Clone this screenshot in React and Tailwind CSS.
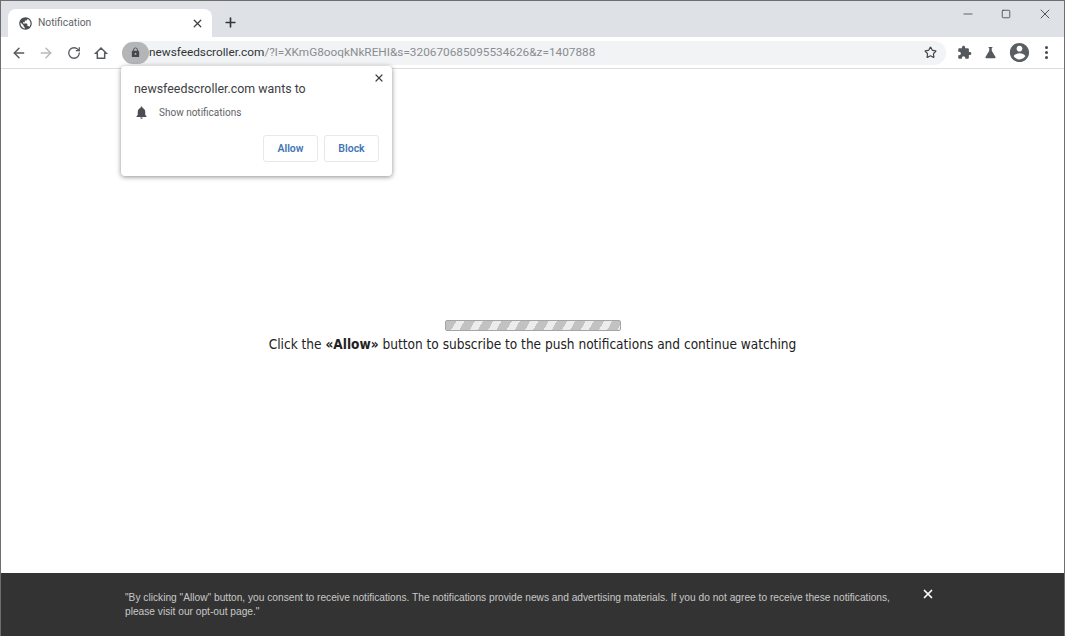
import { ArrowLeft, ArrowRight, RotateCw, Star, X, Plus, Minus, Square } from "lucide-react";

const Mat = ({ d, className }) => (
  <svg viewBox="0 0 24 24" className={className} fill="currentColor"><path d={d} /></svg>
);

const globe = "M12 2C6.48 2 2 6.48 2 12s4.48 10 10 10 10-4.48 10-10S17.52 2 12 2zm-1 17.93c-3.95-.49-7-3.85-7-7.93 0-.62.08-1.21.21-1.79L9 15v1c0 1.1.9 2 2 2v1.93zm6.9-2.54c-.26-.81-1-1.39-1.9-1.39h-1v-3c0-.55-.45-1-1-1H8v-2h2c.55 0 1-.45 1-1V7h2c1.1 0 2-.9 2-2v-.41c2.93 1.19 5 4.06 5 7.41 0 2.08-.8 3.97-2.1 5.39z";
const bell = "M12 22c1.1 0 2-.9 2-2h-4c0 1.1.9 2 2 2zm6-6v-5c0-3.07-1.63-5.64-4.5-6.32V4c0-.83-.67-1.5-1.5-1.5s-1.5.67-1.5 1.5v.68C7.64 5.36 6 7.92 6 11v5l-2 2v1h16v-1l-2-2z";
const lock = "M18 8h-1V6c0-2.76-2.24-5-5-5S7 3.24 7 6v2H6c-1.1 0-2 .9-2 2v10c0 1.1.9 2 2 2h12c1.1 0 2-.9 2-2V10c0-1.1-.9-2-2-2zm-6 9c-1.1 0-2-.9-2-2s.9-2 2-2 2 .9 2 2-.9 2-2 2zm3.1-9H8.9V6c0-1.71 1.39-3.1 3.1-3.1 1.71 0 3.1 1.39 3.1 3.1v2z";
const puzzle = "M20.5 11H19V7c0-1.1-.9-2-2-2h-4V3.5C13 2.12 11.88 1 10.5 1S8 2.12 8 3.5V5H4c-1.1 0-1.99.9-1.99 2v3.8H3.5c1.49 0 2.7 1.21 2.7 2.7s-1.21 2.7-2.7 2.7H2V20c0 1.1.9 2 2 2h3.8v-1.5c0-1.49 1.21-2.7 2.7-2.7 1.49 0 2.7 1.21 2.7 2.7V22H17c1.1 0 2-.9 2-2v-4h1.5c1.38 0 2.5-1.12 2.5-2.5S21.88 11 20.5 11z";
const account = "M12 2C6.48 2 2 6.48 2 12s4.48 10 10 10 10-4.48 10-10S17.52 2 12 2zm0 3c1.66 0 3 1.34 3 3s-1.34 3-3 3-3-1.34-3-3 1.34-3 3-3zm0 14.2c-2.5 0-4.71-1.28-6-3.22.03-1.99 4-3.08 6-3.08 1.99 0 5.97 1.09 6 3.08-1.29 1.94-3.5 3.22-6 3.22z";
const flask = "M9 3h6v1.6h-1V9l6 10.2c.5.9-.1 1.8-1.1 1.8H5.100c-1 0-1.600-.9-1.100-1.800L10 9V4.600H9z";

export default function App() {
  return (
    <div className="relative flex h-[636px] w-[1065px] flex-col overflow-hidden border-x border-t border-[#6e6e6e] bg-white font-['Roboto',sans-serif]">
      {/* tab strip */}
      <div className="flex h-9 shrink-0 items-end bg-[#dee1e6] pl-[7px] text-[#45484c]">
        <div className="flex h-[28px] w-[204px] items-center rounded-t-lg bg-white pl-[10px] pr-2">
          <Mat d={globe} className="h-[15px] w-[15px] text-[#4a4d51]" />
          <span className="ml-[5px] text-[10.3px] text-[#5f6368]">Notification</span>
          <X className="ml-auto h-[13px] w-[13px] text-[#3c4043]" strokeWidth={2.4} />
        </div>
        <Plus className="mb-[7px] ml-[11px] h-[15px] w-[15px] text-[#35383b]" strokeWidth={2.6} />
        <div className="mb-[15px] ml-auto flex items-center text-[#50545a]">
          <Minus className="h-[14px] w-[14px]" strokeWidth={1.5} />
          <Square className="ml-[26px] h-[10px] w-[10px]" strokeWidth={2.2} />
          <X className="ml-[26px] mr-[11px] h-[16px] w-[16px]" strokeWidth={1.5} />
        </div>
      </div>

      {/* toolbar */}
      <div className="flex h-8 shrink-0 items-center border-b border-[#dadce0] bg-white pl-[10px] text-[#55585c]">
        <ArrowLeft className="h-4 w-4" strokeWidth={2.2} />
        <ArrowRight className="ml-[11px] h-4 w-4 text-[#b5b8bc]" strokeWidth={2.2} />
        <RotateCw className="ml-[13px] h-[14px] w-[14px]" strokeWidth={2.2} />
        <svg viewBox="0 0 24 24" className="ml-[12px] h-4 w-4" fill="none" stroke="currentColor" strokeWidth="2.2">
          <path d="M4 12.500 12 4.500l8 8h-2.500V20H6.500v-7.500z" />
        </svg>
        <div className="ml-[13px] flex h-6 w-[824px] items-center rounded-full bg-[#f1f3f4]">
          <div className="flex h-[22px] w-[27px] items-center justify-center rounded-full bg-[#b4b5b7]">
            <Mat d={lock} className="h-[11px] w-[11px] text-[#45484c]" />
          </div>
          <div className="text-[11.8px] text-[#8a8d91]">
            <span className="text-[#303337]">newsfeedscroller.com</span>/?l=XKmG8ooqkNkREHI&amp;s=320670685095534626&amp;z=1407888
          </div>
          <Star className="ml-auto mr-[9px] h-[13px] w-[13px] text-[#45484c]" strokeWidth={2.2} />
        </div>
        <Mat d={puzzle} className="ml-[11px] h-[15px] w-[15px]" />
        <Mat d={flask} className="ml-[11px] h-[15px] w-[15px]" />
        <Mat d={account} className="ml-[10px] h-[23px] w-[23px] text-[#5a5d61]" />
        <div className="ml-[14px] flex flex-col gap-[2px]">
          <span className="h-[3px] w-[3px] rounded-full bg-[#45484c]" />
          <span className="h-[3px] w-[3px] rounded-full bg-[#45484c]" />
          <span className="h-[3px] w-[3px] rounded-full bg-[#45484c]" />
        </div>
      </div>

      {/* permission popup */}
      <div className="absolute left-[120px] top-[65px] flex h-[110px] w-[271px] flex-col rounded-[4px] bg-white px-[13px] shadow-[0_1px_5px_rgba(0,0,0,0.45)]">
        <X className="absolute right-[7px] top-[6px] h-[12px] w-[12px] text-[#3c4043]" strokeWidth={2.4} />
        <div className="mt-[14px] text-[12.4px] leading-[18px] text-[#3c4043]">newsfeedscroller.com wants to</div>
        <div className="mt-[7px] flex items-center text-[#5f6368]">
          <Mat d={bell} className="h-[15px] w-[15px] text-[#4a4d51]" />
          <span className="ml-[10px] text-[10px]">Show notifications</span>
        </div>
        <div className="mt-[15px] flex justify-end gap-[6px] text-[10.5px] font-semibold text-[#3f76b5]">
          <div className="flex h-[27px] w-[55px] items-center justify-center rounded-[3px] border border-[#e6e8ea]">Allow</div>
          <div className="flex h-[27px] w-[55px] items-center justify-center rounded-[3px] border border-[#e6e8ea]">Block</div>
        </div>
      </div>

      {/* page */}
      <div className="flex flex-1 flex-col items-center pt-[251px]">
        <div className="h-[11px] w-[176px] rounded-[2px] border border-[#a5a5a5] bg-[repeating-linear-gradient(120deg,#c2c2c2_0px,#c2c2c2_9px,#ececec_9px,#ececec_16px)]" />
        <div className="mt-[3px] whitespace-nowrap font-['DejaVu_Sans_Condensed','DejaVu_Sans',sans-serif] text-[13.55px] leading-[20px] text-[#222] [font-stretch:condensed]">
          Click the <b>«Allow»</b> button to subscribe to the push notifications and continue watching
        </div>
      </div>

      {/* consent bar */}
      <div className="relative h-[63px] shrink-0 bg-[#333333] pl-[124px] pt-[18px] font-['Liberation_Sans',sans-serif] text-[10.2px] leading-[14px] text-[#c8c8c8]">
        <p className="w-[790px]">
          "By clicking "Allow" button, you consent to receive notifications. The notifications provide news and advertising materials. If you do not agree to receive these notifications, please visit our opt-out page."
        </p>
        <X className="absolute left-[920px] top-[14px] h-[14px] w-[14px] text-white" strokeWidth={3} />
      </div>
    </div>
  );
}
